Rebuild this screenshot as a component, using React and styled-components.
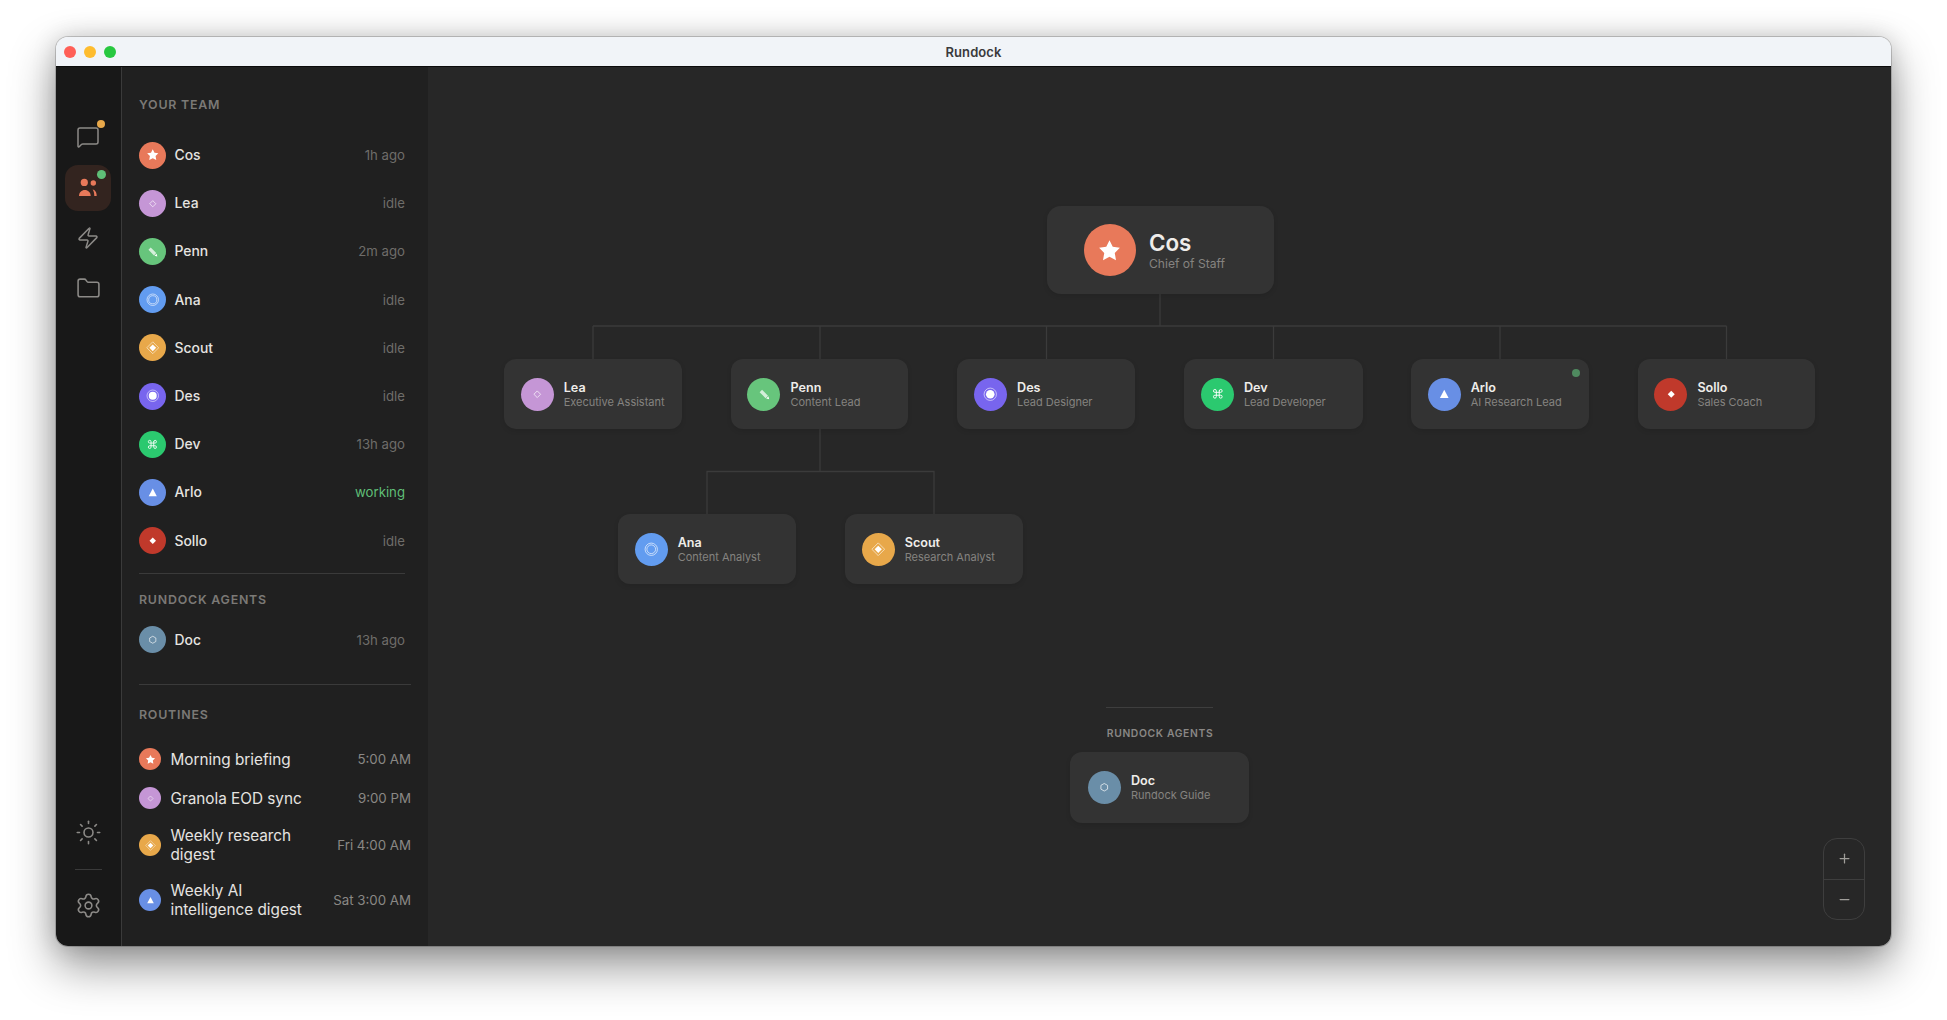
import React from "react";
import styled, { createGlobalStyle } from "styled-components";
import { Folder, MessageSquare, Settings, Sun, Zap, Command, Plus, Minus } from "lucide-react";

const Global = createGlobalStyle`
  html, body { margin: 0; padding: 0; background: #fff; height: 100%; overflow: hidden; }
  * { box-sizing: border-box; }
  #root { height: 100%; }
  body { font-family: Inter, "Liberation Sans", sans-serif; -webkit-font-smoothing: antialiased; }
`;

const Page = styled.div`
  width: 100%;
  height: 100%;
  padding: 37px 56px 75px;
`;
const Window = styled.div`
  width: 1835px;
  height: 908.5px;
  display: flex;
  flex-direction: column;
  border-radius: 12px;
  overflow: hidden;
  box-shadow: 0 0 0 1px rgba(0, 0, 0, 0.18), 0 20px 46px rgba(0, 0, 0, 0.42), 0 0 24px rgba(0, 0, 0, 0.16);
`;
const TitleBar = styled.header`
  height: 30px;
  flex: none;
  background: #f1f4f8;
  border-bottom: 1.2px solid #0c0c0c;
  display: grid;
  grid-template-columns: 1fr auto 1fr;
  align-items: center;
  padding: 0 8px;
`;
const Lights = styled.div`
  display: flex;
  gap: 8px;
`;
const Light = styled.span`
  width: 12px;
  height: 12px;
  border-radius: 50%;
  background: ${(p) => p.$c};
`;
const Title = styled.div`
  font-size: 13px;
  font-weight: 600;
  color: #3a3a3c;
  letter-spacing: 0.1px;
`;
const Body = styled.div`
  flex: 1;
  min-height: 0;
  display: flex;
`;
const Rail = styled.nav`
  width: 66px;
  flex: none;
  background: #181818;
  border-right: 1px solid #3a3a3a;
  display: flex;
  flex-direction: column;
  align-items: center;
  padding: 48px 1px 17px 0;
  gap: 4px;
`;
const RailButton = styled.div`
  position: relative;
  width: 46px;
  height: 46px;
  border-radius: 13px;
  background: ${(p) => (p.$active ? "#33241f" : "transparent")};
  color: #8c8a87;
  display: flex;
  align-items: center;
  justify-content: center;
  padding-bottom: ${(p) => p.$lift || 0}px;
`;
const Badge = styled.span`
  position: absolute;
  left: 32px;
  top: 5px;
  width: ${(p) => (p.$green ? 9 : 8)}px;
  height: ${(p) => (p.$green ? 9 : 8)}px;
  border-radius: 50%;
  background: ${(p) => (p.$green ? "#5fbf77" : "#e8a84a")};
`;
const RailSpacer = styled.div`
  flex: 1;
`;
const RailDivider = styled.div`
  width: 27px;
  height: 1px;
  background: #3a3a3a;
  margin: 9px 0;
`;
const Sidebar = styled.aside`
  width: 306px;
  flex: none;
  background: #202020;
  padding: 30px 17px 0;
  overflow: hidden;
`;
const SectionLabel = styled.div`
  font-size: 12.4px;
  line-height: 16px;
  font-weight: 600;
  letter-spacing: 0.78px;
  color: #7b7976;
  margin-top: ${(p) => p.$mt || 0}px;
  margin-bottom: ${(p) => p.$mb || 0}px;
`;
const Row = styled.div`
  height: 48.2px;
  display: flex;
  align-items: center;
  padding-right: 6px;
`;
const Avatar = styled.div`
  flex: none;
  width: ${(p) => p.$size}px;
  height: ${(p) => p.$size}px;
  border-radius: 50%;
  background: ${(p) => p.$c};
  color: #fff;
  display: flex;
  align-items: center;
  justify-content: center;
`;
const RowName = styled.span`
  flex: 1;
  margin-left: 8.5px;
  font-size: 13.9px;
  font-weight: 450;
  color: #e6e4e1;
`;
const RowStatus = styled.span`
  font-size: 13.2px;
  color: ${(p) => (p.$working ? "#5fbf77" : "#6f6d6a")};
`;
const Divider = styled.div`
  height: 1px;
  background: #3a3a3a;
  margin-top: ${(p) => p.$mt}px;
  margin-right: ${(p) => p.$mr || 0}px;
`;
const Routine = styled.div`
  min-height: 39px;
  padding: 8.5px 0;
  display: flex;
  align-items: center;
`;
const RoutineName = styled.span`
  flex: 1;
  margin-left: 9.5px;
  margin-right: 16px;
  font-size: 15.3px;
  line-height: 19px;
  font-weight: 400;
  color: #e6e4e1;
`;
const RoutineTime = styled.span`
  font-size: 13.3px;
  color: #8a8885;
  white-space: nowrap;
`;
const Canvas = styled.main`
  position: relative;
  flex: 1;
  background: #272727;
  overflow: hidden;
`;
const Wires = styled.svg`
  position: absolute;
  inset: 0;
  width: 100%;
  height: 100%;
`;
const Node = styled.div`
  position: absolute;
  left: ${(p) => p.$x}px;
  top: ${(p) => p.$y}px;
  width: ${(p) => p.$w}px;
  height: ${(p) => p.$h}px;
  background: #333333;
  border-radius: ${(p) => (p.$lead ? 14 : 12)}px;
  box-shadow: 0 2px 5px rgba(0, 0, 0, 0.1);
  display: flex;
  align-items: center;
  padding-left: ${(p) => (p.$lead ? 36.7 : p.$pad || 16.7)}px;
  gap: ${(p) => (p.$lead ? 13.3 : 10)}px;
`;
const NodeText = styled.div`
  display: flex;
  flex-direction: column;
  min-width: 0;
  padding-top: ${(p) => (p.$lead ? 0 : 2)}px;
`;
const NodeName = styled.div`
  font-size: ${(p) => (p.$lead ? 22.4 : 12.6)}px;
  line-height: ${(p) => (p.$lead ? 26 : 14)}px;
  font-weight: 600;
  color: #efedea;
  white-space: nowrap;
`;
const NodeRole = styled.div`
  font-size: ${(p) => (p.$lead ? 12.1 : 11)}px;
  line-height: ${(p) => (p.$lead ? 15 : 14.5)}px;
  color: #858380;
  white-space: nowrap;
`;
const NodeDot = styled.span`
  position: absolute;
  right: 9px;
  top: 9.5px;
  width: 8px;
  height: 8px;
  border-radius: 50%;
  background: #4f8a5f;
`;
const AgentsRule = styled.div`
  position: absolute;
  left: ${1106 - 428}px;
  top: ${707 - 67}px;
  width: 107px;
  height: 1px;
  background: #3e3e3e;
`;
const AgentsLabel = styled.div`
  position: absolute;
  left: ${1060 - 428}px;
  top: ${725 - 67}px;
  width: 200px;
  text-align: center;
  font-size: 10.3px;
  line-height: 16px;
  font-weight: 600;
  letter-spacing: 0.66px;
  color: #8a8885;
`;
const ZoomBox = styled.div`
  position: absolute;
  left: ${1823 - 428}px;
  top: ${838 - 67}px;
  width: 42px;
  height: 82px;
  border: 1px solid #3e3e3e;
  border-radius: 14px;
  display: flex;
  flex-direction: column;
`;
const ZoomButton = styled.div`
  flex: 1;
  display: flex;
  align-items: center;
  justify-content: center;
  color: #a09e9a;
  & + & {
    border-top: 1px solid #3e3e3e;
  }
`;

const glyphs = {
  star: <path d="M10 1.8l2.6 5.2 5.7.8-4.1 4.1 1 5.8-5.2-2.7-5.2 2.7 1-5.8-4.1-4.1 5.7-.8z" fill="#fff" />,
  diamond: <path d="M10 5.4l4.6 4.6-4.6 4.6L5.4 10z" fill="none" stroke="#fff" strokeOpacity=".85" strokeWidth="1.1" />,
  pencil: (
    <g fill="#fff">
      <path d="M3.6 7.2l3.4-3.4 8.2 8.2-3.4 3.4z" fillOpacity=".72" />
      <path d="M12.6 16l3.2-3.2 1 4.2z" />
    </g>
  ),
  rings: (
    <g fill="none" stroke="#fff" strokeOpacity=".8" strokeWidth="1.1">
      <circle cx="10" cy="10" r="8.5" />
      <circle cx="10" cy="10" r="6" />
    </g>
  ),
  gem: (
    <g>
      <path d="M10 1.2l8.8 8.8-8.8 8.8L1.2 10z" fill="none" stroke="#fff" strokeOpacity=".8" strokeWidth="1" />
      <path d="M10 5l5 5-5 5-5-5z" fill="#fff" />
    </g>
  ),
  target: (
    <g>
      <circle cx="10" cy="10" r="8.5" fill="none" stroke="#fff" strokeOpacity=".8" strokeWidth="1" />
      <circle cx="10" cy="10" r="5.9" fill="#fff" />
    </g>
  ),
  triangle: <path d="M10 3.8l6 11.2H4z" fill="#fff" />,
  solid: <path d="M10 5.2l4.8 4.8-4.8 4.8L5.2 10z" fill="#fff" />,
  hex: <path d="M10 4.8l4.6 2.6v5.2L10 15.2l-4.6-2.6V7.4z" fill="none" stroke="#fff" strokeOpacity=".85" strokeWidth="1.1" />,
};

function Face({ a, size, glyph }) {
  return (
    <Avatar $size={size} $c={a.c}>
      {a.g === "cmd" ? (
        <Command size={glyph * 0.8} strokeWidth={1.9} />
      ) : (
        <svg width={glyph} height={glyph} viewBox="0 0 20 20">
          {glyphs[a.g]}
        </svg>
      )}
    </Avatar>
  );
}

const A = {
  Cos: { c: "#e8795a", g: "star" },
  Lea: { c: "#c596d6", g: "diamond" },
  Penn: { c: "#67c57c", g: "pencil" },
  Ana: { c: "#629cf0", g: "rings" },
  Scout: { c: "#e8a84a", g: "gem" },
  Des: { c: "#7865ee", g: "target" },
  Dev: { c: "#2bc96f", g: "cmd" },
  Arlo: { c: "#688fe5", g: "triangle" },
  Sollo: { c: "#c0392b", g: "solid" },
  Doc: { c: "#6a8ea8", g: "hex" },
};

const team = [
  ["Cos", "1h ago"],
  ["Lea", "idle"],
  ["Penn", "2m ago"],
  ["Ana", "idle"],
  ["Scout", "idle"],
  ["Des", "idle"],
  ["Dev", "13h ago"],
  ["Arlo", "working"],
  ["Sollo", "idle"],
];
const routines = [
  ["Cos", "Morning briefing", "5:00 AM"],
  ["Lea", "Granola EOD sync", "9:00 PM"],
  ["Scout", "Weekly research digest", "Fri 4:00 AM"],
  ["Arlo", "Weekly AI intelligence digest", "Sat 3:00 AM"],
];

const OX = 428;
const OY = 67;
const nodes = [
  ["Lea", "Executive Assistant", 504, 359],
  ["Penn", "Content Lead", 730.8, 359],
  ["Des", "Lead Designer", 957.4, 359],
  ["Dev", "Lead Developer", 1184.2, 359, 178.5],
  ["Arlo", "AI Research Lead", 1411, 359],
  ["Sollo", "Sales Coach", 1637.7, 359],
  ["Ana", "Content Analyst", 618, 514],
  ["Scout", "Research Analyst", 845, 514],
];
const centers = [593, 820, 1046.5, 1273.5, 1500, 1726.5];

function ChartWires() {
  const x = (v) => v - OX;
  const y = (v) => v - OY;
  return (
    <Wires>
      <g fill="none" stroke="#3b3b3b" strokeWidth="1.3">
        <path d={`M${x(1160)} ${y(294)}V${y(326)}`} />
        {centers.map((c) => (
          <path key={c} d={`M${x(c)} ${y(326)}V${y(359)}`} />
        ))}
        <path d={`M${x(593)} ${y(326)}H${x(1726.5)}`} />
        <path d={`M${x(820)} ${y(429)}V${y(471.5)}`} />
        <path d={`M${x(707)} ${y(514)}V${y(471.5)}H${x(934)}V${y(514)}`} />
      </g>
    </Wires>
  );
}

function UsersIcon() {
  return (
    <svg width="20" height="20" viewBox="0 0 20 20" fill="#e8795a">
      <circle cx="6.3" cy="4.4" r="3.6" />
      <circle cx="15.3" cy="5" r="2.7" />
      <path d="M1 18c0-3.5 2.6-6 5.8-6s5.9 2.5 5.9 6z" />
      <path d="M14.6 11.6c2.4.2 4.1 2.8 4.1 6.4h-2.4c0-2.6-.6-4.8-1.7-6.4z" />
    </svg>
  );
}

export default function App() {
  return (
    <Page>
      <Global />
      <Window>
        <TitleBar>
          <Lights>
            <Light $c="#ff5f57" />
            <Light $c="#febc2e" />
            <Light $c="#28c840" />
          </Lights>
          <Title>Rundock</Title>
          <span />
        </TitleBar>
        <Body>
          <Rail>
            <RailButton $lift={2}>
              <MessageSquare size={24} strokeWidth={1.5} />
              <Badge />
            </RailButton>
            <RailButton $active>
              <UsersIcon />
              <Badge $green />
            </RailButton>
            <RailButton>
              <Zap size={24} strokeWidth={1.5} />
            </RailButton>
            <RailButton>
              <Folder size={25} strokeWidth={1.5} />
            </RailButton>
            <RailSpacer />
            <RailButton>
              <Sun size={27} strokeWidth={1.4} />
            </RailButton>
            <RailDivider />
            <RailButton>
              <Settings size={27} strokeWidth={1.4} />
            </RailButton>
          </Rail>
          <Sidebar>
            <SectionLabel $mb={18}>YOUR TEAM</SectionLabel>
            {team.map(([n, s]) => (
              <Row key={n}>
                <Face a={A[n]} size={27} glyph={13.5} />
                <RowName>{n}</RowName>
                <RowStatus $working={s === "working"}>{s}</RowStatus>
              </Row>
            ))}
            <Divider $mt={8} $mr={6} />
            <SectionLabel $mt={18.5} $mb={7.6}>RUNDOCK AGENTS</SectionLabel>
            <Row>
              <Face a={A.Doc} size={27} glyph={13.5} />
              <RowName>Doc</RowName>
              <RowStatus>13h ago</RowStatus>
            </Row>
            <Divider $mt={20} />
            <SectionLabel $mt={22.5} $mb={16.2}>ROUTINES</SectionLabel>
            {routines.map(([a, n, t]) => (
              <Routine key={n}>
                <Face a={A[a]} size={22} glyph={11} />
                <RoutineName>{n}</RoutineName>
                <RoutineTime>{t}</RoutineTime>
              </Routine>
            ))}
          </Sidebar>
          <Canvas>
            <ChartWires />
            <Node $lead $x={1047 - OX} $y={206 - OY} $w={226.5} $h={88}>
              <Face a={A.Cos} size={52} glyph={25} />
              <NodeText $lead>
                <NodeName $lead>Cos</NodeName>
                <NodeRole $lead>Chief of Staff</NodeRole>
              </NodeText>
            </Node>
            {nodes.map(([n, r, x, y, w]) => (
              <Node key={n} $x={x - OX} $y={y - OY} $w={w || 177.5} $h={70}>
                <Face a={A[n]} size={33} glyph={14.5} />
                <NodeText>
                  <NodeName>{n}</NodeName>
                  <NodeRole>{r}</NodeRole>
                </NodeText>
                {n === "Arlo" && <NodeDot />}
              </Node>
            ))}
            <AgentsRule />
            <AgentsLabel>RUNDOCK AGENTS</AgentsLabel>
            <Node $x={1070 - OX} $y={752 - OY} $w={179} $h={71} $pad={18}>
              <Face a={A.Doc} size={33} glyph={14.5} />
              <NodeText>
                <NodeName>Doc</NodeName>
                <NodeRole>Rundock Guide</NodeRole>
              </NodeText>
            </Node>
            <ZoomBox>
              <ZoomButton>
                <Plus size={15} strokeWidth={2} />
              </ZoomButton>
              <ZoomButton>
                <Minus size={15} strokeWidth={2} />
              </ZoomButton>
            </ZoomBox>
          </Canvas>
        </Body>
      </Window>
    </Page>
  );
}
